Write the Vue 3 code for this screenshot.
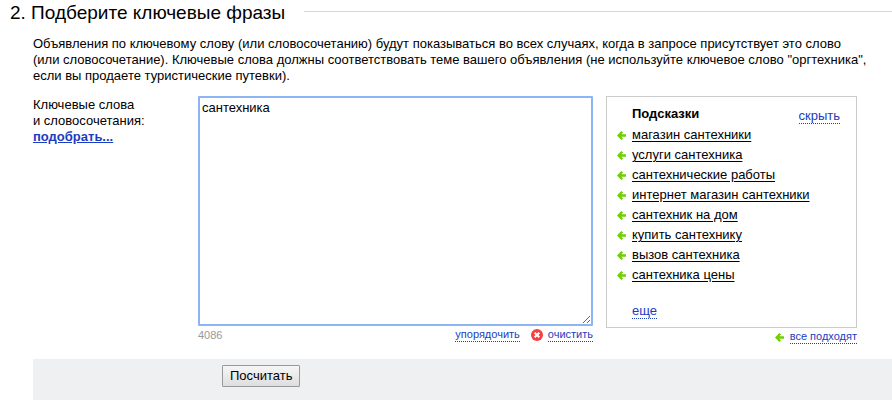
<script setup>
import { ref, computed } from 'vue'

const limit = 4096
const phrases = ref('сантехника')
const hidden = ref(false)
const left = computed(() => limit - phrases.value.replace(/\s/g, '').length)

const hints = [
  'магазин сантехники',
  'услуги сантехника',
  'сантехнические работы',
  'интернет магазин сантехники',
  'сантехник на дом',
  'купить сантехнику',
  'вызов сантехника',
  'сантехника цены',
]

function add(text) {
  phrases.value = phrases.value ? phrases.value + '\n' + text : text
}
function sortPhrases() {
  phrases.value = phrases.value.split('\n').sort().join('\n')
}
</script>

<template>
  <main class="page">
    <header class="heading">
      <h2>2. Подберите ключевые фразы</h2>
      <span class="rule"></span>
    </header>

    <p class="intro">
      Объявления по ключевому слову (или словосочетанию) будут показываться во всех случаях, когда в запросе присутствует это слово<br>
      (или словосочетание). Ключевые слова должны соответствовать теме вашего объявления (не используйте ключевое слово "оргтехника",<br>
      если вы продаете туристические путевки).
    </p>

    <div class="row">
      <div class="caption">
        <label for="phrases">Ключевые слова<br>и словосочетания:</label>
        <a class="pick" href="#pick">подобрать...</a>
      </div>

      <div class="editor">
        <textarea id="phrases" v-model="phrases" spellcheck="false"></textarea>
        <div class="tools">
          <span class="count">{{ left }}</span>
          <button type="button" class="pseudo" @click="sortPhrases">упорядочить</button>
          <svg class="cross" viewBox="0 0 12 12" aria-hidden="true">
            <circle cx="6" cy="6" r="6" fill="#f5413f" />
            <path d="M3.7 3.7L8.3 8.3M8.3 3.7L3.7 8.3" stroke="#fff" stroke-width="2" />
          </svg>
          <button type="button" class="pseudo" @click="phrases = ''">очистить</button>
        </div>
      </div>

      <aside class="side">
        <section class="panel">
          <div class="panel-head">
            <h3>Подсказки</h3>
            <button type="button" class="pseudo" @click="hidden = !hidden">скрыть</button>
          </div>
          <ul v-show="!hidden">
            <li v-for="hint in hints" :key="hint">
              <svg class="arrow" viewBox="0 0 9 9" aria-hidden="true">
                <path d="M5.2 0.8L1.6 4.5L5.2 8.2M1.6 4.5H9" />
              </svg>
              <a href="#add" @click.prevent="add(hint)">{{ hint }}</a>
            </li>
          </ul>
          <button type="button" class="pseudo more">еще</button>
        </section>
        <div class="tools all">
          <svg class="arrow" viewBox="0 0 9 9" aria-hidden="true">
            <path d="M5.2 0.8L1.6 4.5L5.2 8.2M1.6 4.5H9" />
          </svg>
          <button type="button" class="pseudo">все подходят</button>
        </div>
      </aside>
    </div>

    <footer class="bar">
      <button type="button" class="submit">Посчитать</button>
    </footer>
  </main>
</template>

<style>
body {
  margin: 0;
  background: #fff;
}
</style>

<style scoped>
.page {
  font: 13px/16px "Liberation Sans", Arial, sans-serif;
  color: #000;
}
.heading {
  display: flex;
  gap: 19px;
  padding-left: 10px;
}
h2 {
  margin: 0;
  font-size: 19px;
  line-height: 26px;
  font-weight: 400;
}
.rule {
  flex: 1;
  height: 1px;
  margin-top: 11px;
  background: #d6d6d6;
}
.intro {
  margin: 10px 0 0 33px;
  white-space: nowrap;
}
.row {
  display: flex;
  padding: 12px 35px 0 33px;
}
.caption {
  flex: 0 0 165px;
  padding-top: 1px;
}
.caption label,
.pick {
  display: block;
}
.pick {
  width: max-content;
  font-weight: 700;
  color: #1a3dc1;
}
.editor {
  flex: 1;
  min-width: 0;
  margin-right: 13px;
}
textarea {
  display: block;
  box-sizing: border-box;
  width: 100%;
  height: 230px;
  padding: 2px;
  border: 2px solid #8db4f3;
  border-radius: 1px;
  font: inherit;
  outline: 0;
  resize: both;
}
.tools {
  display: flex;
  align-items: center;
  font-size: 11px;
  line-height: 13px;
}
.editor .tools {
  padding-top: 2px;
}
.count {
  margin-right: auto;
  color: #999;
}
.pseudo {
  padding: 0;
  border: 0;
  border-bottom: 1px dotted #1a3dc1;
  background: none;
  font: inherit;
  line-height: 14px;
  color: #1a3dc1;
  cursor: pointer;
}
.tools .pseudo {
  line-height: 13px;
}
.cross {
  width: 12px;
  height: 12px;
  margin: 0 5px 0 11px;
}
.side {
  flex: 0 0 251px;
}
.panel {
  box-sizing: border-box;
  height: 232px;
  padding: 9px 16px 0 10px;
  border: 1px solid #ccc;
}
.panel-head {
  display: flex;
  justify-content: space-between;
  align-items: flex-start;
  height: 19px;
  padding-left: 15px;
}
.panel-head .pseudo {
  margin-top: 3px;
}
h3 {
  margin: 0;
  font-size: 13px;
  line-height: 16px;
}
ul {
  margin: 0;
  padding: 0;
  list-style: none;
}
li {
  display: flex;
  align-items: center;
  gap: 6px;
  height: 20px;
}
li a {
  color: #000;
  text-underline-offset: 2px;
}
.arrow {
  width: 9px;
  height: 9px;
  fill: none;
  stroke: #6fcf00;
  stroke-width: 2.3;
}
.more {
  margin: 19px 0 0 15px;
}
.all {
  justify-content: flex-end;
  gap: 6px;
  padding-top: 2px;
}
.bar {
  margin: 15px 0 0 33px;
  padding: 6px 0 13px 189px;
  background: #eff0f2;
}
.submit {
  display: block;
  height: 22px;
  padding: 0 7px;
  border: 1px solid #999;
  border-radius: 1px;
  background: linear-gradient(#f6f6f6, #dedede);
  font: inherit;
  color: #000;
}
</style>
